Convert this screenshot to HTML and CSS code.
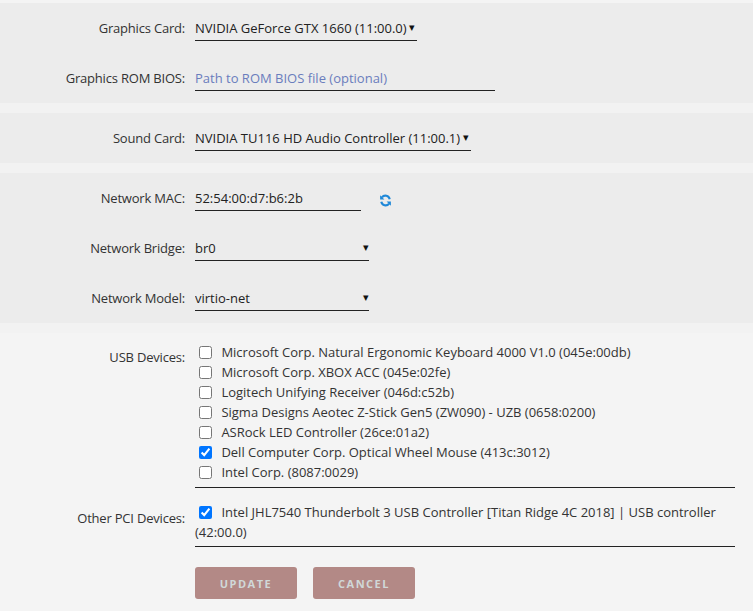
FILE: index.html
```html
<!DOCTYPE html>
<html lang="en">
<head>
    <meta charset="UTF-8">
    <title>VM Edit</title>
    <link rel="stylesheet" href="styles.css">
</head>
<body>
    <form class="vm-form">
        <div class="band">
            <div class="row">
                <label class="label" for="gpu">Graphics Card:</label>
                <span class="select">
                    <select id="gpu">
                        <option>NVIDIA GeForce GTX 1660 (11:00.0)</option>
                    </select>
                </span>
            </div>
            <div class="row">
                <label class="label" for="rom">Graphics ROM BIOS:</label>
                <input type="text" id="rom" class="text rom" placeholder="Path to ROM BIOS file (optional)">
            </div>
        </div>

        <div class="band">
            <div class="row">
                <label class="label" for="sound">Sound Card:</label>
                <span class="select">
                    <select id="sound">
                        <option>NVIDIA TU116 HD Audio Controller (11:00.1)</option>
                    </select>
                </span>
            </div>
        </div>

        <div class="band">
            <div class="row">
                <label class="label" for="mac">Network MAC:</label>
                <input type="text" id="mac" class="text mac" value="52:54:00:d7:b6:2b">
                <svg class="refresh" width="13" height="13" viewBox="0 0 16 16">
                    <path d="M13.2 6.4A5.4 5.4 0 0 0 3.6 4.2" fill="none" stroke="#1f88d8" stroke-width="2.6"/>
                    <path d="M1.4 1.6v5.2h5.2z" fill="#1f88d8"/>
                    <path d="M2.8 9.6a5.4 5.4 0 0 0 9.6 2.2" fill="none" stroke="#1f88d8" stroke-width="2.6"/>
                    <path d="M14.6 14.4V9.2H9.4z" fill="#1f88d8"/>
                </svg>
            </div>
            <div class="row">
                <label class="label" for="bridge">Network Bridge:</label>
                <span class="select wide">
                    <select id="bridge">
                        <option>br0</option>
                    </select>
                </span>
            </div>
            <div class="row">
                <label class="label" for="model">Network Model:</label>
                <span class="select wide">
                    <select id="model">
                        <option>virtio-net</option>
                    </select>
                </span>
            </div>
        </div>

        <div class="devices">
            <div class="row top usb">
                <span class="label">USB Devices:</span>
                <div class="list">
                    <label class="item"><input type="checkbox"> Microsoft Corp. Natural Ergonomic Keyboard 4000 V1.0 (045e:00db)</label>
                    <label class="item"><input type="checkbox"> Microsoft Corp. XBOX ACC (045e:02fe)</label>
                    <label class="item"><input type="checkbox"> Logitech Unifying Receiver (046d:c52b)</label>
                    <label class="item"><input type="checkbox"> Sigma Designs Aeotec Z-Stick Gen5 (ZW090) - UZB (0658:0200)</label>
                    <label class="item"><input type="checkbox"> ASRock LED Controller (26ce:01a2)</label>
                    <label class="item"><input type="checkbox" checked> Dell Computer Corp. Optical Wheel Mouse (413c:3012)</label>
                    <label class="item"><input type="checkbox"> Intel Corp. (8087:0029)</label>
                </div>
            </div>
            <div class="row top pci">
                <span class="label">Other PCI Devices:</span>
                <div class="list">
                    <label class="item"><input type="checkbox" checked> Intel JHL7540 Thunderbolt 3 USB Controller [Titan Ridge 4C 2018] | USB controller (42:00.0)</label>
                </div>
            </div>
            <div class="buttons">
                <button type="button">Update</button>
                <button type="button">Cancel</button>
            </div>
        </div>
    </form>
</body>
</html>
```

FILE: styles.css
```css
body {
    margin: 0;
    background: #f4f4f4;
    font-family: "Open Sans", sans-serif;
    font-size: 13px;
    color: #222222;
}

.vm-form {
    padding-top: 3px;
}

.band {
    background: #ececec;
    border-bottom: 10px solid #f2f2f2;
}

.row {
    display: flex;
    align-items: center;
    height: 50px;
}

.label {
    width: 185px;
    padding-right: 10px;
    text-align: right;
    color: #333333;
    flex-shrink: 0;
    letter-spacing: -0.2px;
}

.text, .select select {
    font-family: inherit;
    font-size: 13px;
    color: #222222;
    background: transparent;
    border: none;
    border-bottom: 1px solid #222222;
    border-radius: 0;
    outline: none;
    height: 26px;
    padding: 1px 0 0 0;
    box-sizing: border-box;
}

.text::placeholder {
    color: #6a7dbd;
}

.rom {
    width: 300px;
}

.mac {
    width: 166px;
}

.refresh {
    margin-left: 18px;
    margin-top: 4px;
}

.select {
    position: relative;
    display: inline-block;
}

.select select {
    appearance: none;
    -webkit-appearance: none;
    padding-right: 10px;
    width: 100%;
}

.select::after {
    content: "\25BE";
    position: absolute;
    right: 2px;
    top: 4px;
    font-size: 11px;
    color: #111111;
    pointer-events: none;
}

.select.wide {
    width: 174px;
}

.select.wide::after {
    right: 0;
}

.devices {
    background: #f4f4f4;
    padding-top: 9px;
    padding-bottom: 20px;
}

.row.top {
    align-items: flex-start;
    height: auto;
}

.usb .label {
    padding-top: 5px;
    line-height: 20px;
}

.list {
    width: 540px;
    border-bottom: 1px solid #222222;
}

.usb .list {
    padding-bottom: 5px;
}

.item {
    display: block;
    line-height: 20px;
    color: #333333;
}

.item input {
    margin: 0 6px 0 4px;
    width: 13px;
    height: 13px;
    vertical-align: -2px;
}

.pci .label {
    padding-top: 20px;
    line-height: 20px;
}

.pci .list {
    padding-top: 14px;
    padding-bottom: 4px;
}

.buttons {
    display: flex;
    gap: 16px;
    padding-left: 195px;
    margin-top: 20px;
}

.buttons button {
    width: 102px;
    height: 32px;
    border: none;
    border-radius: 3px;
    background: #b38986;
    color: #d0d8d8;
    font-family: "Open Sans", sans-serif;
    font-weight: bold;
    font-size: 11px;
    letter-spacing: 1.5px;
    text-transform: uppercase;
}
```
